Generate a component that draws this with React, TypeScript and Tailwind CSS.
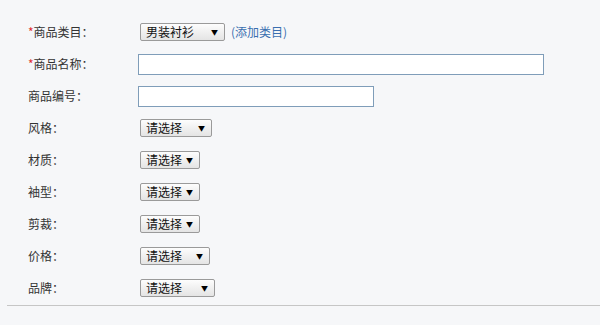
const font = "[font-family:'Noto_Sans_CJK_SC','Liberation_Sans',sans-serif]";

interface Row {
    label: string;
    required?: boolean;
    kind: "select" | "input";
    value?: string;
    width: string;
}

const rows: Row[] = [
    { label: "商品类目：", required: true, kind: "select", value: "男装衬衫", width: "w-[85px]" },
    { label: "商品名称：", required: true, kind: "input", width: "w-[406px]" },
    { label: "商品编号：", kind: "input", width: "w-[236px]" },
    { label: "风格：", kind: "select", value: "请选择", width: "w-[72px]" },
    { label: "材质：", kind: "select", value: "请选择", width: "w-[60px]" },
    { label: "袖型：", kind: "select", value: "请选择", width: "w-[60px]" },
    { label: "剪裁：", kind: "select", value: "请选择", width: "w-[60px]" },
    { label: "价格：", kind: "select", value: "请选择", width: "w-[70px]" },
    { label: "品牌：", kind: "select", value: "请选择", width: "w-[75px]" },
];

const FakeSelect = ({ value, width }: { value: string; width: string }) => (
    <div
        className={`${width} ml-[2px] h-[18px] flex items-center justify-between pl-[5px] pr-[6px] border border-[#9a9a9a] rounded-[2px] bg-gradient-to-b from-[#fdfdfd] to-[#e4e4e4] text-[12px] leading-none text-[#111]`}
    >
        <span>{value}</span>
        <span className="text-[7px] text-black">▼</span>
    </div>
);

export default function App() {
    return (
        <div className={`w-[600px] h-[325px] bg-[#f6f7f9] ${font} pt-4`}>
            <div className="flex flex-col">
                {rows.map((row) => (
                    <div key={row.label} className="flex items-center h-8 pl-[28px]">
                        <div className="w-[110px] text-[12px] text-[#333] leading-none">
                            {row.required && <span className="text-[#e03030]">*</span>}
                            {row.label}
                        </div>
                        {row.kind === "input" ? (
                            <div className={`${row.width} h-[21px] bg-white border border-[#7f9db9]`} />
                        ) : (
                            <div className="flex items-center">
                                <FakeSelect value={row.value ?? ""} width={row.width} />
                                {row.label === "商品类目：" && (
                                    <span className="ml-[6px] text-[12px] text-[#3a6fb0]">(添加类目)</span>
                                )}
                            </div>
                        )}
                    </div>
                ))}
            </div>
            <div className="ml-[7px] mt-px h-px bg-[#c6c6c6]" />
        </div>
    );
}
